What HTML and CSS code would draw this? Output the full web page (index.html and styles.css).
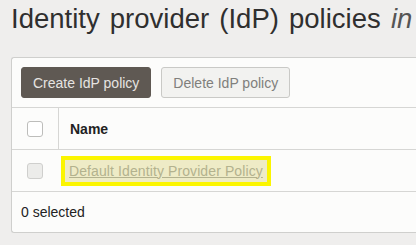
FILE: index.html
```html
<!DOCTYPE html>
<html lang="en">
<head>
    <meta charset="UTF-8">
    <title>Identity provider (IdP) policies</title>
    <link rel="stylesheet" href="styles.css">
</head>
<body>
    <h1 class="page-title">Identity provider (IdP) policies <em>in</em></h1>

    <div class="card">
        <!-- Actions -->
        <div class="toolbar">
            <button class="btn btn-primary">Create IdP policy</button>
            <button class="btn btn-secondary" disabled>Delete IdP policy</button>
        </div>

        <!-- Policy list -->
        <div class="table">
            <div class="row head">
                <div class="cell check"><span class="box"></span></div>
                <div class="cell name">Name</div>
            </div>
            <div class="row">
                <div class="cell check"><span class="box box-off"></span></div>
                <div class="cell name">
                    <span class="highlight"><a href="#" class="policy-link">Default Identity Provider Policy</a></span>
                </div>
            </div>
        </div>

        <div class="footer">0 selected</div>
    </div>
</body>
</html>
```

FILE: styles.css
```css
/* Global */
body {
    margin: 0;
    font-family: 'Liberation Sans', Arial, sans-serif;
    background: #efeeed;
    color: #333;
    height: 245px;
    overflow: hidden;
}

/* Title */
.page-title {
    font-weight: normal;
    font-size: 27.5px;
    word-spacing: 2.5px;
    line-height: 30px;
    margin: 0;
    padding: 4px 0 0 11px;
    white-space: nowrap;
    color: #2f2f2f;
}

.page-title em {
    color: #555;
}

/* Card - runs off the right side of the view */
.card {
    margin: 23px 0 0 11px;
    background: #fcfcfb;
    border: 1px solid #cfcfcd;
    border-right: none;
    border-radius: 3px 0 0 3px;
}

.toolbar {
    display: flex;
    gap: 10px;
    padding: 9px;
    border-bottom: 1px solid #d6d6d4;
}

.btn {
    font-family: 'Liberation Sans', Arial, sans-serif;
    font-size: 14px;
    height: 31px;
    padding: 0 11px;
    border-radius: 3px;
}

.btn-primary {
    background: #5f5953;
    color: #e6e4e1;
    border: 1px solid #5f5953;
}

.btn-secondary {
    background: #f2f2f0;
    color: #807f7c;
    border: 1px solid #c9c9c6;
}

/* Table */
.row {
    display: flex;
    height: 41px;
    border-bottom: 1px solid #d6d6d4;
}

.cell {
    display: flex;
    align-items: center;
}

.cell.check {
    width: 46px;
    justify-content: center;
}

.row.head .cell.check {
    border-right: 1px solid #d6d6d4;
}

.row:not(.head) .cell.check {
    margin-right: 1px;
}

.cell.name {
    padding-left: 2px;
    font-size: 14px;
}

.row.head .cell.name {
    padding-left: 11px;
    font-weight: bold;
    color: #222;
}

.box {
    width: 14px;
    height: 14px;
    border: 1px solid #bdbdbb;
    border-radius: 3px;
    background: #fff;
}

.box-off {
    background: #ececea;
    border-color: #cfcfcd;
}

.highlight {
    display: inline-block;
    border: 4px solid #fbf500;
    background: #eeebc6;
    padding: 3px 4px;
}

.policy-link {
    color: #b3b28e;
    text-decoration: underline;
    letter-spacing: 0.1px;
}

.footer {
    padding: 0 9px;
    height: 40px;
    display: flex;
    align-items: center;
    font-size: 14px;
    color: #222;
}
```
